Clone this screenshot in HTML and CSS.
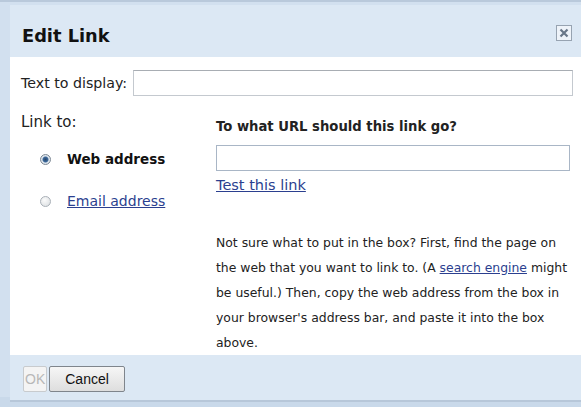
FILE: index.html
```html
<!DOCTYPE html>
<html>
<head>
<meta charset="utf-8">
<title>Edit Link</title>
<link rel="stylesheet" href="styles.css">
</head>
<body>
<div class="frame">
  <div class="dialog">
    <div class="titlebar">
      <span class="title">Edit Link</span>
      <span class="close">
        <svg width="16" height="16" viewBox="0 0 16 16">
          <rect x="0.5" y="0.5" width="15" height="15" fill="#eef3f9" stroke="#97a3b1"/>
          <path d="M4.5 4.5 L11.5 11.5 M11.5 4.5 L4.5 11.5" stroke="#687788" stroke-width="2.2"/>
        </svg>
      </span>
    </div>
    <div class="content">
      <div class="display-row">
        <label class="label">Text to display:</label>
        <input class="field display-field" type="text">
      </div>
      <div class="main">
        <div class="side">
          <div class="side-label">Link to:</div>
          <div class="option">
            <span class="radio checked"></span>
            <span class="opt-text active">Web address</span>
          </div>
          <div class="option">
            <span class="radio"></span>
            <a class="opt-text link" href="#">Email address</a>
          </div>
        </div>
        <div class="pane">
          <div class="question">To what URL should this link go?</div>
          <input class="field url-field" type="text">
          <a class="link test" href="#">Test this link</a>
          <p class="help">Not sure what to put in the box? First, find the page on the web that you want to link to. (A <a class="link" href="#">search engine</a> might be useful.) Then, copy the web address from the box in your browser's address bar, and paste it into the box above.</p>
        </div>
      </div>
    </div>
    <div class="footer">
      <button class="btn disabled">OK</button>
      <button class="btn">Cancel</button>
    </div>
  </div>
</div>
</body>
</html>
```

FILE: styles.css
```css
html, body {
  margin: 0;
  padding: 0;
  width: 581px;
  height: 407px;
  overflow: hidden;
  background: #c9d9ea;
}

.frame {
  padding: 5px 0 0 10px;
  height: 397px;
  box-sizing: border-box;
  background: linear-gradient(#b9c9db 0, #b9c9db 2px, #d2e0ef 2px);
}

.dialog {
  height: 397px;
  display: flex;
  flex-direction: column;
  font-family: "DejaVu Sans", Verdana, sans-serif;
  color: #222;
}

.titlebar {
  height: 52px;
  background: #dce8f4;
  display: flex;
  justify-content: space-between;
  align-items: flex-start;
  padding: 0 9px 0 12px;
  box-sizing: border-box;
}

.title {
  font-size: 17.8px;
  font-weight: bold;
  color: #111;
  margin-top: 20px;
}

.close {
  display: flex;
  margin-top: 20px;
}

.content {
  background: #fff;
  height: 298px;
  padding: 13px 8px 0 11px;
  box-sizing: border-box;
}

.display-row {
  display: flex;
  align-items: center;
  gap: 6px;
}

.label {
  font-size: 14.2px;
  color: #222;
}

.field {
  border: 1px solid #c4c9cf;
  border-top-color: #a8adb3;
  background: #fff;
  margin: 0;
  padding: 0;
  box-sizing: border-box;
  outline: none;
}

.display-field {
  flex: 1;
  height: 26px;
}

.main {
  display: flex;
  margin-top: 18px;
}

.side {
  width: 195px;
}

.side-label {
  font-size: 15px;
  line-height: 16px;
  color: #222;
}

.option {
  display: flex;
  align-items: center;
  height: 20px;
  margin-left: 19px;
}

.side-label + .option {
  margin-top: 19px;
}

.option + .option {
  margin-top: 22px;
}

.radio {
  width: 11px;
  height: 11px;
  border-radius: 50%;
  border: 1px solid #a9b0b7;
  background: radial-gradient(circle at 40% 35%, #fbfbfb, #d8dcdf);
  box-sizing: border-box;
  margin-right: 16px;
  flex: none;
}

.radio.checked {
  border-color: #7c8894;
  background: radial-gradient(circle, #27456a 0, #3d6a9c 2.5px, #e3e9ef 3.5px, #c8d0d8 100%);
}

.opt-text {
  font-size: 14px;
}

.opt-text.active {
  font-size: 13.5px;
  font-weight: bold;
  color: #111;
}

.link {
  color: #2b3f8f;
  text-decoration: underline;
}

.pane {
  width: 354px;
  padding-top: 5px;
}

.question {
  font-size: 13.2px;
  line-height: 15px;
  font-weight: bold;
  color: #222;
}

.url-field {
  display: block;
  width: 354px;
  height: 26px;
  margin-top: 11px;
  border-color: #a9b6c6;
}

.test {
  display: inline-block;
  font-size: 14.5px;
  line-height: 17px;
  margin-top: 6px;
}

.help {
  width: 362px;
  margin: 36px 0 0;
  font-size: 12.4px;
  line-height: 25px;
  color: #222;
}

.footer {
  height: 47px;
  background: #dce8f4;
  border-bottom: 2px solid #b7c7d9;
  display: flex;
  align-items: center;
  padding: 3px 0 0 13px;
  box-sizing: border-box;
  gap: 2px;
}

.btn {
  font-family: "Liberation Sans", Arial, sans-serif;
  font-size: 14px;
  height: 26px;
  padding: 0 15px;
  border: 1px solid #7f858c;
  border-radius: 2px;
  background: linear-gradient(#f6f6f6, #dedede);
  color: #111;
}

.btn.disabled {
  color: #b8b8b8;
  border-color: #c8cbce;
  background: #f4f4f4;
  padding: 0 1px;
}
```
